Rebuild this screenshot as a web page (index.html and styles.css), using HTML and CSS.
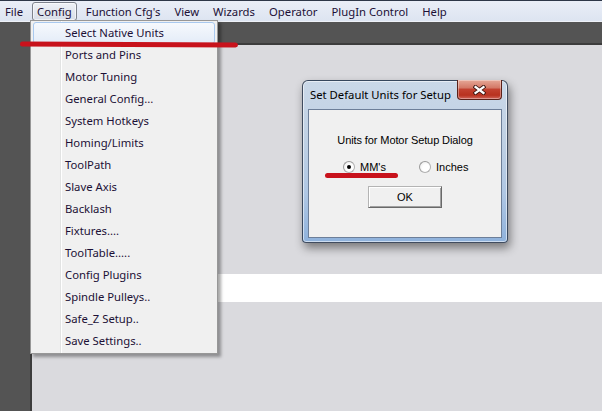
FILE: index.html
```html
<!DOCTYPE html>
<html>
<head>
<meta charset="utf-8">
<link rel="stylesheet" href="styles.css">
</head>
<body>
<div class="screen">
  <div class="menubar">
    <span class="mb-item">File</span>
    <span class="mb-item active">Config</span>
    <span class="mb-item">Function Cfg's</span>
    <span class="mb-item">View</span>
    <span class="mb-item">Wizards</span>
    <span class="mb-item">Operator</span>
    <span class="mb-item">PlugIn Control</span>
    <span class="mb-item">Help</span>
  </div>
  <div class="workspace">
    <div class="canvas">
      <div class="white-band"></div>
    </div>
  </div>

  <div class="menu">
    <div class="menu-item hot">Select Native Units</div>
    <div class="menu-item">Ports and Pins</div>
    <div class="menu-item">Motor Tuning</div>
    <div class="menu-item">General Config...</div>
    <div class="menu-item">System Hotkeys</div>
    <div class="menu-item">Homing/Limits</div>
    <div class="menu-item">ToolPath</div>
    <div class="menu-item">Slave Axis</div>
    <div class="menu-item">Backlash</div>
    <div class="menu-item">Fixtures....</div>
    <div class="menu-item">ToolTable.....</div>
    <div class="menu-item">Config Plugins</div>
    <div class="menu-item">Spindle Pulleys..</div>
    <div class="menu-item">Safe_Z Setup..</div>
    <div class="menu-item">Save Settings..</div>
  </div>

  <div class="dialog">
    <div class="dlg-title">
      <span class="dlg-caption">Set Default Units for Setup</span>
      <span class="dlg-close">
        <svg width="13" height="10" viewBox="0 0 13 10">
          <path d="M2.5 2 L10.5 8 M10.5 2 L2.5 8" stroke="#3a1510" stroke-width="4" stroke-linecap="square" fill="none"/>
          <path d="M2.5 2 L10.5 8 M10.5 2 L2.5 8" stroke="#ffffff" stroke-width="2.2" stroke-linecap="square" fill="none"/>
        </svg>
      </span>
    </div>
    <div class="dlg-client">
      <div class="dlg-label">Units for Motor Setup Dialog</div>
      <div class="radio-row">
        <span class="radio-opt first"><span class="radio checked"></span><span>MM's</span></span>
        <span class="radio-opt"><span class="radio"></span><span>Inches</span></span>
      </div>
      <div class="btn-row"><span class="btn">OK</span></div>
    </div>
  </div>

  <div class="mark mark-menu"></div>
  <div class="mark mark-mm"></div>
</div>
</body>
</html>
```

FILE: styles.css
```css
* { box-sizing: border-box; }
html, body { margin: 0; padding: 0; }
body { width: 602px; height: 411px; overflow: hidden; background: #dadade; }

.screen {
  position: relative;
  width: 602px;
  height: 411px;
  overflow: hidden;
  font-family: "Segoe UI", "Noto Sans", sans-serif;
  font-size: 11.3px;
  color: #1c1036;
}

/* menu bar */
.menubar {
  height: 22px;
  border-top: 1px solid #2e3748;
  border-bottom: 1px solid #eef1f7;
  background: linear-gradient(#eaeef7, #dde4f1);
  display: flex;
  align-items: center;
  gap: 4px;
  padding-left: 0;
}
.mb-item {
  height: 19px;
  line-height: 17px;
  padding: 0 4px;
  border: 1px solid transparent;
  border-radius: 3px;
  white-space: nowrap;
}
.mb-item.active {
  border-color: #7d828c;
  background: linear-gradient(#eef1f6, #d8dee8);
  box-shadow: inset 0 0 0 1px rgba(255,255,255,.6);
}

/* workspace */
.workspace {
  height: 389px;
  background: #545454;
  padding: 21px 0 0 30px;
}
.canvas {
  height: 100%;
  background: #dadade;
  border-top: 2px solid #3c3c3c;
  border-left: 2px solid #3c3c3c;
  padding-top: 229px;
}
.white-band {
  height: 28px;
  background: #ffffff;
}

/* dropdown menu */
.menu {
  position: absolute;
  left: 30px;
  top: 20px;
  width: 188px;
  padding: 1px 2px;
  border: 1px solid #979797;
  background: linear-gradient(to right, #f0f0f0 29px, #e2e3e3 29px, #e2e3e3 30px, #ffffff 30px, #ffffff 31px, #f0f0f0 31px);
  box-shadow: 3px 3px 3px rgba(0,0,0,.35);
}
.menu-item {
  height: 22px;
  line-height: 20px;
  padding-left: 31px;
  border: 1px solid transparent;
  border-radius: 3px;
  white-space: nowrap;
}
.menu-item.hot {
  border-color: #a9c9ef;
  background: linear-gradient(#f6f9fd, #e4ecf8);
}

/* dialog */
.dialog {
  position: absolute;
  left: 302px;
  top: 80px;
  width: 206px;
  height: 163px;
  padding: 0 5px 4px 5px;
  border: 1px solid rgba(40,52,70,.85);
  border-radius: 6px 6px 4px 4px;
  background: linear-gradient(#cad8e8 0%, #c0d1e4 35%, #afc7e4 70%, #8fb2dc 100%);
  box-shadow: inset 0 0 0 1px rgba(255,255,255,.55), 2px 5px 10px rgba(0,0,0,.45);
  display: flex;
  flex-direction: column;
}
.dlg-title {
  position: relative;
  height: 28px;
  padding: 4px 0 0 2px;
  line-height: 20px;
  font-size: 11.3px;
  color: #000;
  white-space: nowrap;
}
.dlg-close {
  position: absolute;
  right: 0;
  top: -1px;
  width: 45px;
  height: 20px;
  border: 1px solid #5a2119;
  border-top: none;
  border-radius: 0 0 4px 4px;
  background: linear-gradient(#e6a897 0%, #d47a68 40%, #c2412f 50%, #b8321f 80%, #d0665a 100%);
  display: flex;
  align-items: center;
  justify-content: center;
  box-shadow: inset 0 0 0 1px rgba(255,255,255,.35);
}
.dlg-client {
  flex: 1;
  border: 1px solid #6d7f99;
  background: #f0f0f0;
  font-family: "Liberation Sans", Arial, sans-serif;
  font-size: 11px;
  color: #000;
  display: flex;
  flex-direction: column;
  align-items: stretch;
}
.dlg-label {
  margin-top: 23px;
  height: 14px;
  line-height: 14px;
  text-align: center;
  letter-spacing: -0.1px;
}
.radio-row {
  margin-top: 13px;
  height: 14px;
  display: flex;
  align-items: center;
  padding-left: 34px;
}
.radio-opt {
  display: flex;
  align-items: center;
  gap: 5px;
  line-height: 14px;
}
.radio-opt.first { width: 76px; }
.radio {
  position: relative;
  width: 12px;
  height: 12px;
  border-radius: 50%;
  border: 1px solid #b1b1b1;
  border-top-color: #9a9a9a;
  border-left-color: #9a9a9a;
  background: radial-gradient(circle at 60% 60%, #ffffff 40%, #e4e4e4 100%);
}
.radio.checked::after {
  content: "";
  position: absolute;
  left: 3px;
  top: 3px;
  width: 4px;
  height: 4px;
  border-radius: 50%;
  background: #000;
}
.btn-row {
  margin-top: 12px;
  display: flex;
  justify-content: center;
}
.btn {
  width: 74px;
  height: 22px;
  line-height: 20px;
  text-align: center;
  border: 1px solid;
  border-color: #b4b4b4 #696969 #696969 #b4b4b4;
  box-shadow: inset 1px 1px 0 #ffffff, inset -1px -1px 0 #a0a0a0;
  background: #f0f0f0;
}

/* red annotation strokes */
.mark {
  position: absolute;
  background: #c8121c;
  border-radius: 3px;
}
.mark-menu {
  left: 20px;
  top: 42px;
  width: 218px;
  height: 5px;
  transform: rotate(0.3deg);
}
.mark-mm {
  left: 325px;
  top: 173px;
  width: 73px;
  height: 5px;
}
```
